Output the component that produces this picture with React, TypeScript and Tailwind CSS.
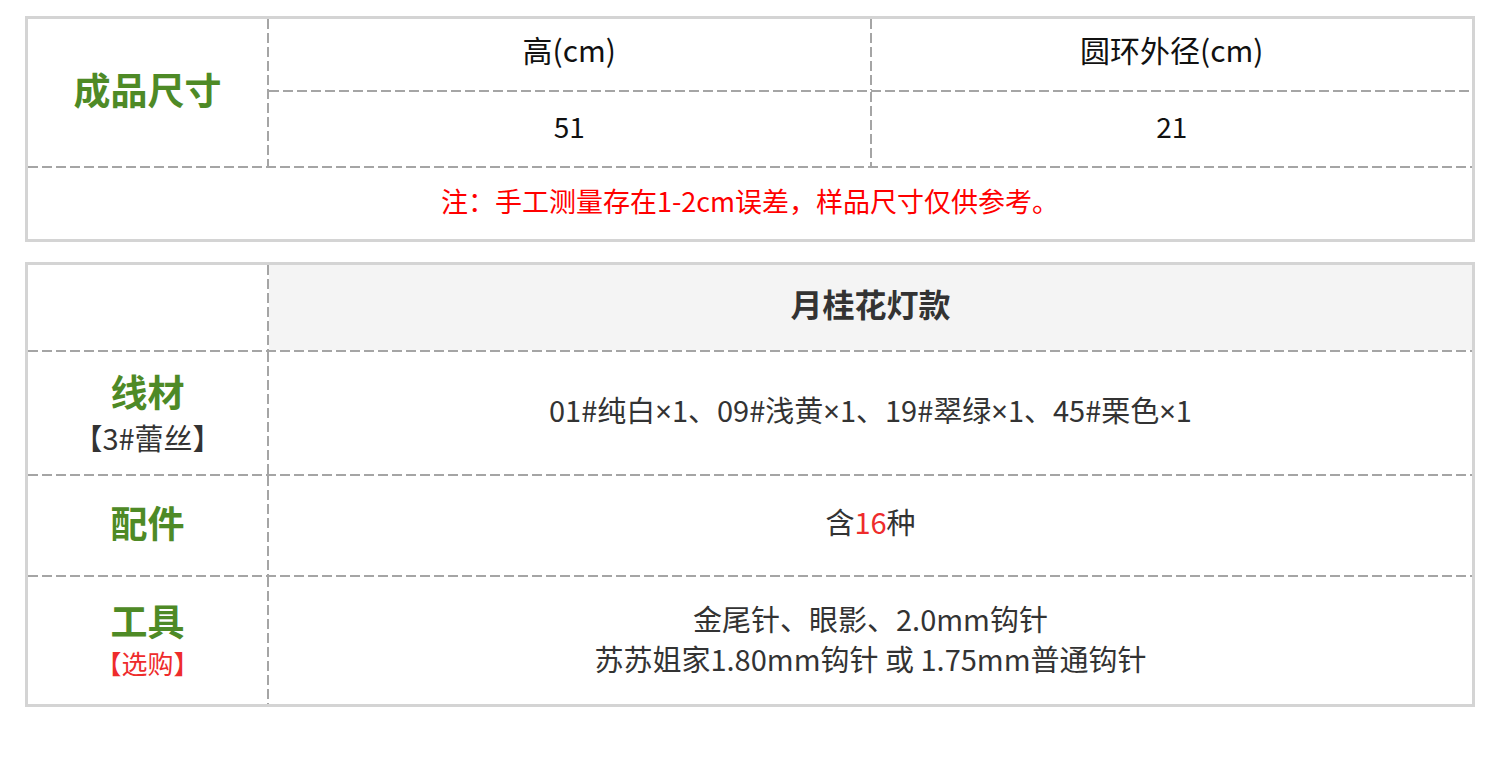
import React from 'react';

const font = { fontFamily: '"Noto Sans CJK SC", "Noto Sans", sans-serif' };

const HLine: React.FC = () => (
  <div className="h-[2px] w-full shrink-0 bg-[repeating-linear-gradient(90deg,#a5a5a5_0_10px,transparent_10px_14px)]" />
);

const VLine: React.FC = () => (
  <div className="w-[2px] shrink-0 self-stretch bg-[repeating-linear-gradient(180deg,#a5a5a5_0_10px,transparent_10px_14px)]" />
);

// narrow latin multiplication sign, like the reference
const X: React.FC = () => <span className="font-[family-name:Noto_Sans]">×</span>;

const LabelCell: React.FC<{ title: string; sub?: React.ReactNode; className?: string }> = ({ title, sub, className = '' }) => (
  <div className={`flex w-[239px] shrink-0 flex-col items-center justify-center ${className}`}>
    <div className="text-[37px] font-bold leading-[44px] text-[#4e8a26]">{title}</div>
    {sub}
  </div>
);

const SizeTable: React.FC = () => (
  <div className="w-[1450px] border-[3px] border-[#d4d4d4] bg-white">
    <div className="flex">
      <LabelCell title="成品尺寸" className="pb-[8px]" />
      <VLine />
      <div className="flex flex-1 flex-col">
        <div className="flex h-[71px]">
          <div className="flex flex-1 items-center justify-center pb-[10px] text-[30px] text-[#111]">高(cm)</div>
          <VLine />
          <div className="flex flex-1 items-center justify-center pb-[10px] text-[30px] text-[#111]">圆环外径(cm)</div>
        </div>
        <HLine />
        <div className="flex h-[74px]">
          <div className="flex flex-1 items-center justify-center pb-[6px] text-[28px] text-[#111]">51</div>
          <VLine />
          <div className="flex flex-1 items-center justify-center pb-[6px] text-[28px] text-[#111]">21</div>
        </div>
      </div>
    </div>
    <HLine />
    <div className="flex h-[71px] items-center justify-center pb-[4px] text-[27px] text-[#ff0000]">
      注：手工测量存在1-2cm误差，样品尺寸仅供参考。
    </div>
  </div>
);

const MaterialTable: React.FC = () => (
  <div className="w-[1450px] border-[3px] border-[#d4d4d4] bg-white">
    <div className="flex h-[85px]">
      <div className="w-[239px] shrink-0" />
      <VLine />
      <div className="flex flex-1 items-center justify-center bg-[#f4f4f4] pb-[10px] text-[32px] font-bold text-[#333]">
        月桂花灯款
      </div>
    </div>
    <HLine />
    <div className="flex h-[122px]">
      <LabelCell
        title="线材"
        className="pb-[4px]"
        sub={<div className="mt-[8px] text-[29px] leading-[32px] text-[#333]">【3#蕾丝】</div>}
      />
      <VLine />
      <div className="flex flex-1 items-center justify-center pb-[6px] text-[29px] text-[#333]">
        <span>
          01#纯白<X />1、09#浅黄<X />1、19#翠绿<X />1、45#栗色<X />1
        </span>
      </div>
    </div>
    <HLine />
    <div className="flex h-[99px]">
      <LabelCell title="配件" className="pb-[8px]" />
      <VLine />
      <div className="flex flex-1 items-center justify-center pb-[8px] text-[29px] text-[#333]">
        <span>
          含<span className="text-[#ee2c2c]">16</span>种
        </span>
      </div>
    </div>
    <HLine />
    <div className="flex h-[127px]">
      <LabelCell
        title="工具"
        className="pb-[4px]"
        sub={<div className="mt-[5px] text-[26px] leading-[32px] text-[#ee2c2c]">【选购】</div>}
      />
      <VLine />
      <div className="flex flex-1 flex-col items-center justify-center pb-[6px] text-[29px] leading-[40px] text-[#333]">
        <div>金尾针、眼影、2.0mm钩针</div>
        <div>苏苏姐家1.80mm钩针 或 1.75mm普通钩针</div>
      </div>
    </div>
  </div>
);

export default function App() {
  return (
    <div className="min-h-[783px] w-[1500px] bg-white pl-[25px] pt-[16px]" style={font}>
      <SizeTable />
      <div className="mt-[20px]">
        <MaterialTable />
      </div>
    </div>
  );
}
